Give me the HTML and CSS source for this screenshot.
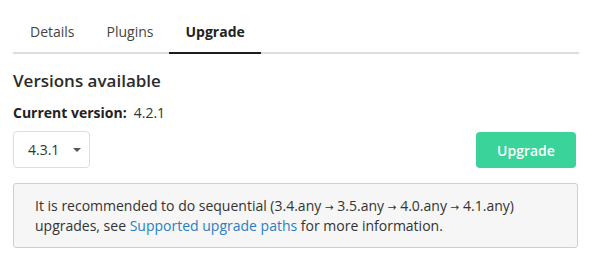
FILE: index.html
```html
<!DOCTYPE html>
<html>
<head>
<meta charset="utf-8">
<link rel="stylesheet" href="styles.css">
</head>
<body>
<div class="page">
  <nav class="tabs">
    <div class="tab">Details</div>
    <div class="tab">Plugins</div>
    <div class="tab active">Upgrade</div>
  </nav>
  <h2 class="title">Versions available</h2>
  <div class="current"><span class="label">Current version:</span><span class="value">4.2.1</span></div>
  <div class="row">
    <div class="select">4.3.1<span class="caret"></span></div>
    <button class="btn">Upgrade</button>
  </div>
  <div class="note">It is recommended to do sequential (3.4.any <span class="arr">→</span> 3.5.any <span class="arr">→</span> 4.0.any <span class="arr">→</span> 4.1.any) upgrades, see <a class="link" href="#">Supported upgrade paths</a> for more information.</div>
</div>
</body>
</html>
```
FILE: styles.css
```css
html, body {
  margin: 0;
  background: #fff;
}
body {
  font-family: "Open Sans", "Noto Sans", sans-serif;
  color: #333;
  font-size: 14px;
}
.page {
  padding: 0 13px;
}
.tabs {
  display: flex;
  border-bottom: 2px solid #ddd;
}
.tab {
  padding: 22px 16px 10px;
  line-height: 20px;
  color: #444;
  margin-bottom: -2px;
  border-bottom: 2px solid transparent;
}
.tab:first-child {
  padding-left: 17px;
}
.tab.active {
  font-weight: 700;
  color: #222;
  border-bottom-color: #1d1d1d;
}
.title {
  margin: 15px 0 0;
  font-size: 17px;
  font-weight: 600;
  line-height: 24px;
  color: #2b2b2b;
}
.current {
  margin-top: 10px;
  line-height: 20px;
  display: flex;
  gap: 7px;
}
.label {
  font-weight: 700;
  color: #222;
}
.value {
  color: #333;
}
.row {
  margin-top: 8px;
  display: flex;
  justify-content: space-between;
  align-items: flex-start;
}
.select {
  box-sizing: border-box;
  height: 37px;
  width: 77px;
  border: 1px solid #ddd;
  border-radius: 4px;
  display: flex;
  align-items: center;
  padding-left: 14px;
  color: #333;
}
.caret {
  margin-left: 14px;
  width: 0;
  height: 0;
  border-left: 4px solid transparent;
  border-right: 4px solid transparent;
  border-top: 4px solid #555;
}
.btn {
  margin-top: 1px;
  margin-right: 3px;
  width: 100px;
  height: 36px;
  border: none;
  border-radius: 4px;
  background: #3ad399;
  color: #fff;
  font-family: "Open Sans", "Noto Sans", sans-serif;
  font-weight: 600;
  font-size: 14px;
}
.note {
  margin-top: 15px;
  margin-right: 1px;
  background: #f6f6f6;
  border: 1px solid #cfcfcf;
  border-radius: 3px;
  padding: 12px 21px;
  line-height: 19.5px;
  color: #333;
}
.arr {
  font-family: "DejaVu Sans", sans-serif;
  font-size: 10.5px;
  line-height: 1;
  vertical-align: 0.5px;
}
.link {
  color: #2a7fc0;
  text-decoration: none;
}
```
